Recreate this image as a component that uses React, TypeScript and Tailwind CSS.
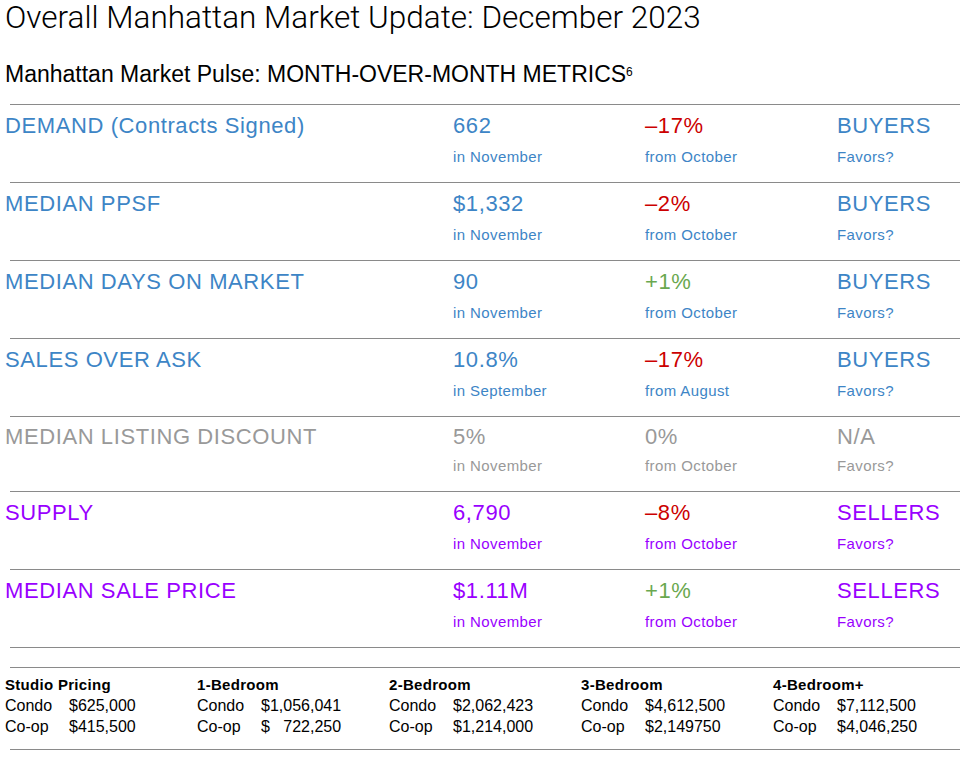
import React from "react";

type Row = {
  label: string;
  value: string;
  period: string;
  change: string;
  from: string;
  favors: string;
  tone: string;
  changeTone: string;
  short?: boolean;
};

const rows: Row[] = [
  { label: "DEMAND (Contracts Signed)", value: "662", period: "in November", change: "\u201317%", from: "from October", favors: "BUYERS", tone: "text-[#3d85c6]", changeTone: "text-[#cc0000]" },
  { label: "MEDIAN PPSF", value: "$1,332", period: "in November", change: "\u20132%", from: "from October", favors: "BUYERS", tone: "text-[#3d85c6]", changeTone: "text-[#cc0000]" },
  { label: "MEDIAN DAYS ON MARKET", value: "90", period: "in November", change: "+1%", from: "from October", favors: "BUYERS", tone: "text-[#3d85c6]", changeTone: "text-[#6aa84f]" },
  { label: "SALES OVER ASK", value: "10.8%", period: "in September", change: "\u201317%", from: "from August", favors: "BUYERS", tone: "text-[#3d85c6]", changeTone: "text-[#cc0000]" },
  { label: "MEDIAN LISTING DISCOUNT", value: "5%", period: "in November", change: "0%", from: "from October", favors: "N/A", tone: "text-[#999999]", changeTone: "text-[#999999]", short: true },
  { label: "SUPPLY", value: "6,790", period: "in November", change: "\u20138%", from: "from October", favors: "SELLERS", tone: "text-[#9900ff]", changeTone: "text-[#cc0000]" },
  { label: "MEDIAN SALE PRICE", value: "$1.11M", period: "in November", change: "+1%", from: "from October", favors: "SELLERS", tone: "text-[#9900ff]", changeTone: "text-[#6aa84f]" },
];

const pricing = [
  { title: "Studio Pricing", condo: "$625,000", coop: "$415,500" },
  { title: "1-Bedroom", condo: "$1,056,041", coop: "$   722,250" },
  { title: "2-Bedroom", condo: "$2,062,423", coop: "$1,214,000" },
  { title: "3-Bedroom", condo: "$4,612,500", coop: "$2,149750" },
  { title: "4-Bedroom+", condo: "$7,112,500", coop: "$4,046,250" },
];

function Rule() {
  return <div className="ml-[5px] h-px w-[950px] bg-[#8a8a8a]" />;
}

function MetricRow({ row }: { row: Row }) {
  const sub = `text-[15px] leading-[20px] tracking-[0.4px] ${row.short ? "mt-[5px]" : "mt-[7px]"}`;
  const main = "text-[22px] leading-[28px] tracking-[0.6px]";
  return (
    <div
      className={`grid grid-cols-[448px_192px_192px_1fr] ${
        row.short ? "h-[74px] pt-[6px]" : "h-[77px] pt-[7px]"
      } ${row.tone}`}
    >
      <div className={main}>{row.label}</div>
      <div>
        <div className={main}>{row.value}</div>
        <div className={sub}>{row.period}</div>
      </div>
      <div>
        <div className={`${main} ${row.changeTone}`}>{row.change}</div>
        <div className={sub}>{row.from}</div>
      </div>
      <div>
        <div className={main}>{row.favors}</div>
        <div className={sub}>Favors?</div>
      </div>
    </div>
  );
}

export default function App() {
  return (
    <div className="h-[762px] w-[970px] overflow-hidden bg-white px-[5px] font-['Liberation_Sans',Arial,sans-serif] text-black">
      <h1 className="font-['Roboto',sans-serif] text-[31.5px] font-light leading-[36px]">
        Overall Manhattan Market Update: December 2023
      </h1>
      <h2 className="mt-[26px] text-[23px] leading-[24px]">
        Manhattan Market Pulse: MONTH-OVER-MONTH METRICS
        <sup className="text-[12px]">6</sup>
      </h2>
      <div className="mt-[18px]">
        {rows.map((row) => (
          <div key={row.label}>
            <Rule />
            <MetricRow row={row} />
          </div>
        ))}
        <Rule />
      </div>
      <div className="mt-[19px]">
        <Rule />
        <div className="grid h-[81px] grid-cols-5 pt-[6px] text-[16px] leading-[21px]">
          {pricing.map((p) => (
            <div key={p.title}>
              <div className="text-[15px] font-bold tracking-[0.3px]">{p.title}</div>
              <div className="grid grid-cols-[64px_1fr]">
                <span>Condo</span>
                <span className="whitespace-pre">{p.condo}</span>
                <span>Co-op</span>
                <span className="whitespace-pre">{p.coop}</span>
              </div>
            </div>
          ))}
        </div>
        <Rule />
      </div>
    </div>
  );
}
